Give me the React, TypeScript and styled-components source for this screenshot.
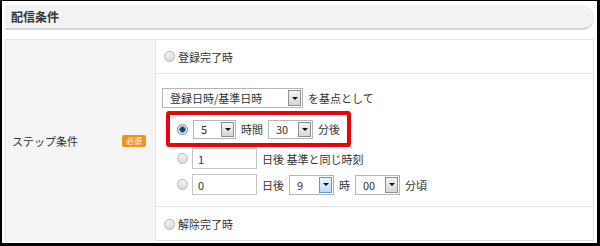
import styled, { createGlobalStyle } from "styled-components";

const GlobalStyle = createGlobalStyle`
  html, body {
    margin: 0;
    padding: 0;
    background: #ffffff;
  }
  body {
    font-family: "Noto Sans CJK JP", "Noto Sans", sans-serif;
    color: #333333;
  }
`;

const Frame = styled.div`
  box-sizing: border-box;
  width: 600px;
  height: 246px;
  border-style: solid;
  border-color: #000000;
  border-width: 1px 3px 3px 2px;
  padding: 4px 3px 0 3px;
  background: #ffffff;
`;

const Header = styled.div`
  height: 23px;
  display: flex;
  align-items: center;
  padding-left: 6px;
  background: #f2f2f2;
  border-bottom: 2px solid #d6d6d6;
  border-radius: 0 12px 12px 0;
  font-size: 12px;
  font-weight: 700;
  color: #333333;
`;

const Table = styled.div`
  margin-top: 9px;
  display: grid;
  grid-template-columns: 150px 1fr;
  border: 1px solid #e2e2e2;
  height: 202px;
  box-sizing: border-box;
`;

const LabelCell = styled.div`
  background: #f4f5f4;
  border-right: 1px solid #e2e2e2;
  display: flex;
  align-items: center;
  justify-content: space-between;
  padding: 0 9px 0 6px;
  font-size: 11px;
`;

const Badge = styled.span`
  display: inline-flex;
  align-items: center;
  justify-content: center;
  width: 24px;
  height: 12px;
  border-radius: 2px;
  background: #f39219;
  color: #ffffff;
  font-size: 8px;
  line-height: 1;
`;

const Rows = styled.div`
  display: flex;
  flex-direction: column;
`;

const Row = styled.div<{ $h: number; $last?: boolean }>`
  height: ${({ $h }) => $h}px;
  box-sizing: border-box;
  border-bottom: ${({ $last }) => ($last ? "none" : "1px solid #e2e2e2")};
  display: flex;
  align-items: center;
  padding-left: 8px;
  gap: 4px;
  font-size: 11px;
`;

const StepBlock = styled.div`
  height: 133px;
  box-sizing: border-box;
  border-bottom: 1px solid #e2e2e2;
  padding: 14px 0 0 6px;
  display: flex;
  flex-direction: column;
  font-size: 11px;
`;

const Line = styled.div<{ $indent?: number; $mt?: number }>`
  display: flex;
  align-items: center;
  gap: 5px;
  padding-left: ${({ $indent }) => $indent ?? 0}px;
  margin-top: ${({ $mt }) => $mt ?? 0}px;
`;

const Highlight = styled.div`
  margin: 3px 0 0 4px;
  width: 185px;
  height: 36px;
  box-sizing: border-box;
  border: 4px solid #e8050a;
  border-radius: 3px;
  display: flex;
  align-items: center;
  padding-left: 7px;
  gap: 5px;
`;

const Radio = styled.span<{ $checked?: boolean }>`
  width: 11px;
  height: 11px;
  box-sizing: border-box;
  border-radius: 50%;
  border: 1px solid ${({ $checked }) => ($checked ? "#6f8fae" : "#b4b4b4")};
  background: ${({ $checked }) =>
    $checked
      ? "radial-gradient(circle, #1d3f66 0 2px, #5d86b3 2.5px 3px, #dfe9f4 3.5px)"
      : "linear-gradient(#f6f6f6, #d9d9d9)"};
  flex-shrink: 0;
  margin-right: ${({ $checked }) => ($checked ? 0 : -1)}px;
`;

const SelectBox = styled.div<{ $w: number; $h?: number }>`
  width: ${({ $w }) => $w}px;
  height: ${({ $h }) => $h ?? 19}px;
  box-sizing: border-box;
  border: 1px solid #b6b6b6;
  background: #ffffff;
  display: flex;
  align-items: center;
  justify-content: space-between;
  padding: 1px 1px 1px 7px;
  flex-shrink: 0;
`;

const Arrow = styled.span<{ $active?: boolean }>`
  width: 13px;
  align-self: stretch;
  box-sizing: border-box;
  border: 1px solid ${({ $active }) => ($active ? "#5b9bd1" : "#8f8f8f")};
  background: ${({ $active }) =>
    $active
      ? "linear-gradient(#eaf5fd, #b9ddf7)"
      : "linear-gradient(#f5f5f5, #d6d6d6)"};
  display: flex;
  align-items: center;
  justify-content: center;
  &::after {
    content: "";
    border-left: 3px solid transparent;
    border-right: 3px solid transparent;
    border-top: 3px solid #111111;
  }
`;

const TextInput = styled.div`
  width: 65px;
  height: 21px;
  box-sizing: border-box;
  border: 1px solid #c6c6c6;
  display: flex;
  align-items: center;
  padding-left: 5px;
  flex-shrink: 0;
`;

function Select({ value, width, height, active }: { value: string; width: number; height?: number; active?: boolean }) {
  return (
    <SelectBox $w={width} $h={height}>
      <span>{value}</span>
      <Arrow $active={active} />
    </SelectBox>
  );
}

export default function App() {
  return (
    <>
      <GlobalStyle />
      <Frame>
        <Header>配信条件</Header>
        <Table>
          <LabelCell>
            <span>ステップ条件</span>
            <Badge>必須</Badge>
          </LabelCell>
          <Rows>
            <Row $h={34}>
              <Radio />
              <span>登録完了時</span>
            </Row>
            <StepBlock>
              <Line>
                <Select value="登録日時/基準日時" width={141} height={20} />
                <span>を基点として</span>
              </Line>
              <Highlight>
                <Radio $checked />
                <Select value="5" width={43} />
                <span>時間</span>
                <Select value="30" width={45} />
                <span>分後</span>
              </Highlight>
              <Line $indent={15} $mt={1}>
                <Radio />
                <TextInput>1</TextInput>
                <span>日後 基準と同じ時刻</span>
              </Line>
              <Line $indent={15} $mt={5}>
                <Radio />
                <TextInput>0</TextInput>
                <span>日後</span>
                <Select value="9" width={45} height={20} active />
                <span>時</span>
                <Select value="00" width={45} height={20} />
                <span>分頃</span>
              </Line>
            </StepBlock>
            <Row $h={34} $last>
              <Radio />
              <span>解除完了時</span>
            </Row>
          </Rows>
        </Table>
      </Frame>
    </>
  );
}
